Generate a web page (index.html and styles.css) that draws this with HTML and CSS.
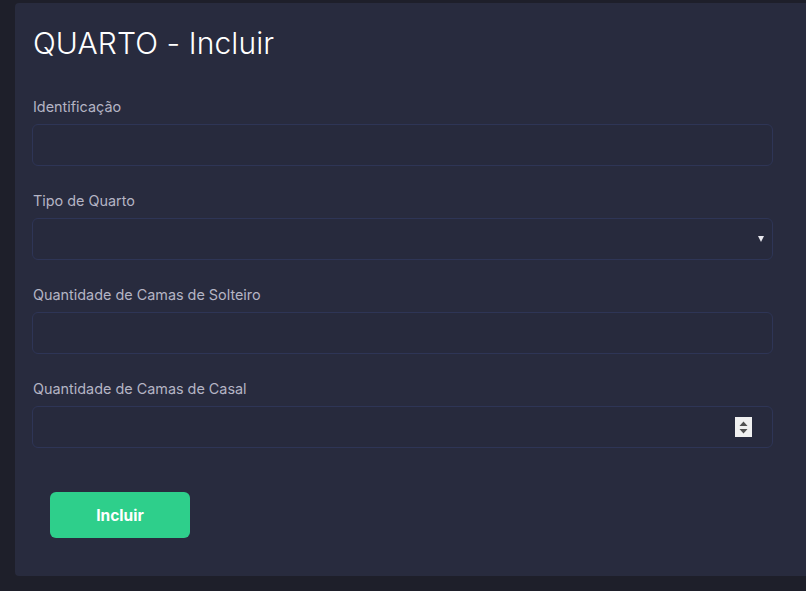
FILE: index.html
```html
<!DOCTYPE html>
<html lang="pt">
<head>
<meta charset="utf-8">
<title>QUARTO - Incluir</title>
<link rel="stylesheet" href="styles.css">
</head>
<body>
<main class="card">
  <h1 class="title">QUARTO - Incluir</h1>
  <form class="form">
    <div class="field">
      <label class="label" for="ident">Identificação</label>
      <input class="control" id="ident" type="text">
    </div>
    <div class="field">
      <label class="label" for="tipo">Tipo de Quarto</label>
      <div class="select-wrap">
        <select class="control select" id="tipo"><option></option></select>
        <span class="caret"></span>
      </div>
    </div>
    <div class="field">
      <label class="label" for="solteiro">Quantidade de Camas de Solteiro</label>
      <input class="control" id="solteiro" type="text">
    </div>
    <div class="field">
      <label class="label" for="casal">Quantidade de Camas de Casal</label>
      <div class="number-wrap">
        <input class="control" id="casal" type="text">
        <span class="spinner">
          <svg width="17" height="20" viewBox="0 0 17 20"><path d="M4.5 9 L8.5 4.5 L12.5 9 Z" fill="#505050"/><path d="M4.5 12 L12.5 12 L8.5 16.5 Z" fill="#505050"/></svg>
        </span>
      </div>
    </div>
    <div class="actions">
      <button class="btn" type="button">Incluir</button>
    </div>
  </form>
</main>
</body>
</html>
```

FILE: styles.css
```css
* { box-sizing: border-box; }
html, body { margin: 0; padding: 0; }
body {
  background: #1e1f2a;
  font-family: "Inter", "Open Sans", sans-serif;
  width: 806px;
  height: 591px;
  overflow: hidden;
  padding: 3px 0 0 15px;
}
.card {
  background: #282b3e;
  border-radius: 4px 0 0 4px;
  height: 573px;
  padding: 20px 33px 0 17px;
}
.title {
  margin: 0 0 0 1px;
  font-weight: 300;
  font-size: 30px;
  line-height: 40px;
  color: #ffffff;
  letter-spacing: 0.1px;
}
.form {
  margin-top: 35px;
  display: flex;
  flex-direction: column;
  gap: 26px;
}
.field {
  display: flex;
  flex-direction: column;
  gap: 8px;
}
.label {
  font-size: 14.4px;
  line-height: 18px;
  color: #b4b4c4;
  padding-left: 1px;
}
.control {
  display: block;
  width: 741px;
  height: 42px;
  background: #272a3d;
  border: 1px solid #2e3556;
  border-radius: 6px;
  color: #fff;
  font: inherit;
  outline: none;
  padding: 0 12px;
}
.select {
  appearance: none;
  -webkit-appearance: none;
}
.select-wrap, .number-wrap {
  position: relative;
  width: 741px;
}
.caret {
  position: absolute;
  right: 9px;
  top: 18px;
  width: 0;
  height: 0;
  border-left: 3.5px solid transparent;
  border-right: 3.5px solid transparent;
  border-top: 6px solid #e8e8ee;
}
.spinner {
  position: absolute;
  left: 703px;
  top: 11px;
  width: 17px;
  height: 20px;
  background: #f0f0f0;
  display: flex;
}
.actions {
  padding: 18px 0 0 18px;
}
.btn {
  width: 140px;
  height: 46px;
  background: #2ecf8b;
  border: none;
  border-radius: 6px;
  color: #ffffff;
  font-family: inherit;
  font-weight: 700;
  font-size: 15.5px;
}
```
